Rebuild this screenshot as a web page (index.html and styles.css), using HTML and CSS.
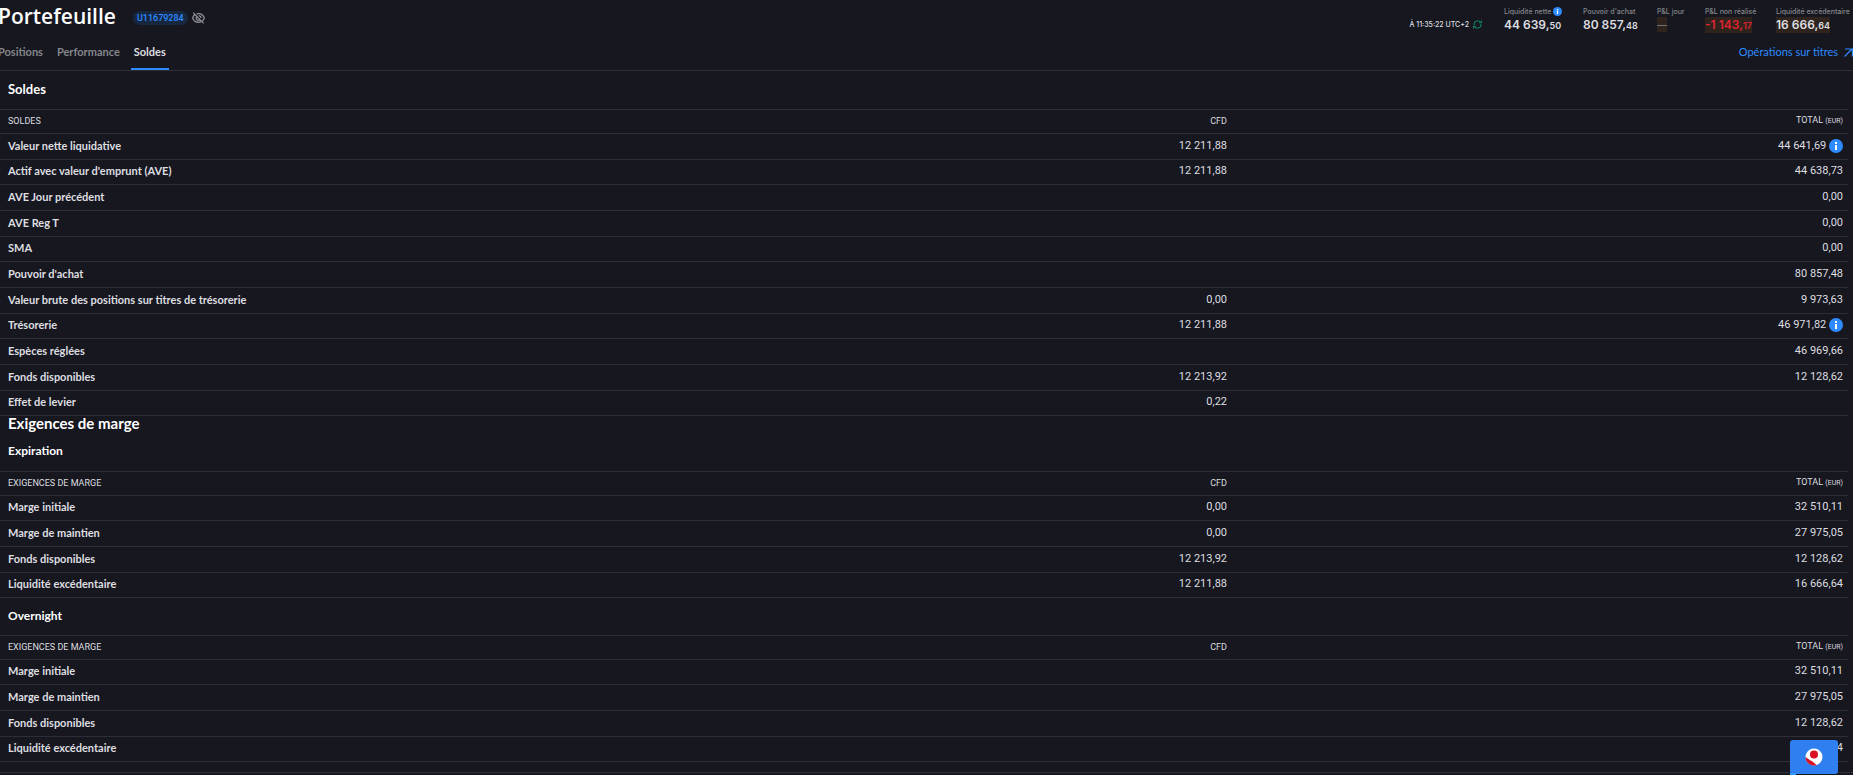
FILE: index.html
```
<!DOCTYPE html>
<html lang="fr">
<head>
  <meta charset="UTF-8">
  <meta name="viewport" content="width=device-width, initial-scale=1.0">
  <title>Portefeuille</title>
  <link rel="stylesheet" href="styles.css">
</head>

<body>
  <header class="topbar">
    <div class="account">
      <h1>Portefeuille</h1>
      <span class="account-id">U11679284</span>
      <button class="icon-btn" type="button" aria-label="Masquer les montants">
        <svg width="13" height="12" viewBox="0 0 13 12" fill="none" stroke="#909196" stroke-width="1.3">
          <path d="M2.700 2.600C1.800 3.400 1.100 4.500.7 6c.9 2.700 3 4.300 5.800 4.300.9 0 1.800-.2 2.600-.6M4.600 1.900C5.200 1.700 5.800 1.600 6.500 1.600c2.800 0 4.900 1.700 5.800 4.400-.4 1.200-1 2.100-1.900 2.900M1.200.6l10.400 10.800"/>
          <path d="M4.500 4.600a2.400 2.400 0 0 0 3.300 3.300M6.700 3.600a2.400 2.400 0 0 1 2.200 2.400"/>
        </svg>
      </button>
    </div>

    <div class="summary">
      <div class="updated">
        <span>À 11:35:22 UTC+2</span>
        <button class="icon-btn" type="button" aria-label="Actualiser">
          <svg width="9" height="9" viewBox="0 0 9 9" fill="none" stroke="#0f8a70" stroke-width="1">
            <path d="M1 5V4a3 3 0 0 1 3-3h1.500a3 3 0 0 1 2.300 1.300M8.500.5v2.300H6M8 4v1a3 3 0 0 1-3 3H3.500a3 3 0 0 1-2.300-1.300M.5 8.500V6.200H3"/>
          </svg>
        </button>
      </div>
      <dl class="figures">
        <div class="figure net">
          <dt>Liquidité nette
            <svg class="info-small" viewBox="0 0 14 14"><circle cx="7" cy="7" r="7" fill="#2e8bff"/><path d="M6 3h2v2H6zM6 6h2v5H6z" fill="#fff"/></svg>
          </dt>
          <dd>44 639,<small>50</small></dd>
        </div>
        <div class="figure power">
          <dt>Pouvoir d'achat</dt>
          <dd>80 857,<small>48</small></dd>
        </div>
        <div class="figure day">
          <dt>P&amp;L jour</dt>
          <dd class="changed dash">—</dd>
        </div>
        <div class="figure unrealized">
          <dt>P&amp;L non réalisé</dt>
          <dd class="changed loss">-1 143,<small>17</small></dd>
        </div>
        <div class="figure">
          <dt>Liquidité excédentaire</dt>
          <dd class="changed">16 666,<small>64</small></dd>
        </div>
      </dl>
    </div>
  </header>

  <nav class="tabs">
    <a href="#positions">Positions</a>
    <a href="#performance">Performance</a>
    <a class="active" href="#soldes">Soldes</a>
    <a class="operations" href="#operations">Opérations sur titres
      <svg width="9" height="9" viewBox="0 0 9 9" fill="none" stroke="#2e8bff" stroke-width="1.200"><path d="M.5 8.500L8 1M1 1h7.400v7.500"/></svg>
    </a>
  </nav>

  <main>
    <h2 class="balances-title" id="soldes">Soldes</h2>
    <table class="balances">
      <thead>
        <tr><th>SOLDES</th><th>CFD</th><th>TOTAL <small>(EUR)</small></th></tr>
      </thead>
      <tbody>
        <tr>
          <td>Valeur nette liquidative</td><td>12 211,88</td>
          <td>44 641,69 <svg class="info" viewBox="0 0 14 14"><circle cx="7" cy="7" r="7" fill="#2e8bff"/><path d="M6 3h2v2H6zM6 6h2v5H6z" fill="#fff"/></svg></td>
        </tr>
        <tr><td>Actif avec valeur d'emprunt (AVE)</td><td>12 211,88</td><td>44 638,73</td></tr>
        <tr><td>AVE Jour précédent</td><td></td><td>0,00</td></tr>
        <tr><td>AVE Reg T</td><td></td><td>0,00</td></tr>
        <tr><td>SMA</td><td></td><td>0,00</td></tr>
        <tr><td>Pouvoir d'achat</td><td></td><td>80 857,48</td></tr>
        <tr><td>Valeur brute des positions sur titres de trésorerie</td><td>0,00</td><td>9 973,63</td></tr>
        <tr>
          <td>Trésorerie</td><td>12 211,88</td>
          <td>46 971,82 <svg class="info" viewBox="0 0 14 14"><circle cx="7" cy="7" r="7" fill="#2e8bff"/><path d="M6 3h2v2H6zM6 6h2v5H6z" fill="#fff"/></svg></td>
        </tr>
        <tr><td>Espèces réglées</td><td></td><td>46 969,66</td></tr>
        <tr><td>Fonds disponibles</td><td>12 213,92</td><td>12 128,62</td></tr>
        <tr><td>Effet de levier</td><td>0,22</td><td></td></tr>
      </tbody>
    </table>

    <h2 class="margin-title">Exigences de marge</h2>
    <h3 class="first">Expiration</h3>
    <table class="margins">
      <thead>
        <tr><th>EXIGENCES DE MARGE</th><th>CFD</th><th>TOTAL <small>(EUR)</small></th></tr>
      </thead>
      <tbody>
        <tr><td>Marge initiale</td><td>0,00</td><td>32 510,11</td></tr>
        <tr><td>Marge de maintien</td><td>0,00</td><td>27 975,05</td></tr>
        <tr><td>Fonds disponibles</td><td>12 213,92</td><td>12 128,62</td></tr>
        <tr><td>Liquidité excédentaire</td><td>12 211,88</td><td>16 666,64</td></tr>
      </tbody>
    </table>

    <h3>Overnight</h3>
    <table class="margins">
      <thead>
        <tr><th>EXIGENCES DE MARGE</th><th>CFD</th><th>TOTAL <small>(EUR)</small></th></tr>
      </thead>
      <tbody>
        <tr><td>Marge initiale</td><td></td><td>32 510,11</td></tr>
        <tr><td>Marge de maintien</td><td></td><td>27 975,05</td></tr>
        <tr><td>Fonds disponibles</td><td></td><td>12 128,62</td></tr>
        <tr><td>Liquidité excédentaire</td><td></td><td>16 666,64</td></tr>
      </tbody>
    </table>
  </main>
  <footer></footer>

  <button class="assistant" type="button" aria-label="Assistant">
    <svg width="18" height="18" viewBox="0 0 18 18">
      <circle cx="9" cy="9" r="8.500" fill="#fff"/>
      <circle cx="9" cy="6.500" r="4" fill="#d81222"/>
      <path d="M.5 8.800C3 11.500 8 13 11.500 17.200A8.600 8.600 0 0 1 .5 8.800z" fill="#d81222"/>
    </svg>
  </button>
</body>

</html>
```
FILE: styles.css
```
* {
  box-sizing: border-box;
}

body {
  margin: 0;
  background-color: #16171f;
  color: #dedee0;
  font-family: Lato, "Liberation Sans", sans-serif;
  font-size: 11px;
  font-weight: 700;
  overflow: hidden;
}

h1, h2, h3, dl, dd {
  margin: 0;
}

h1, h2, h3 {
  color: #fff;
}

.icon-btn {
  display: flex;
  padding: 0;
  border: 0;
  background: none;
}

/* header */
.topbar {
  display: flex;
  justify-content: space-between;
  height: 36px;
}

.account {
  display: flex;
  align-items: center;
  height: 36px;
  margin-left: -2px;
}

h1 {
  font-family: "Open Sans", sans-serif;
  font-size: 21px;
  font-weight: 600;
  line-height: 32px;
  height: 36px;
  margin-right: 17px;
}

.account-id {
  padding: 0 4px;
  margin-right: 4px;
  border-radius: 7px;
  background-color: #172740;
  color: #2e8bff;
  font-family: Roboto, sans-serif;
  font-size: 9px;
  font-weight: 500;
  line-height: 14px;
}

.summary {
  display: flex;
  font-family: Inter, sans-serif;
  font-weight: 500;
}

.updated {
  display: flex;
  align-items: center;
  gap: 4px;
  height: 48px;
  margin-right: 22px;
  font-size: 7px;
}

.figures {
  display: flex;
  padding: 5px 5px 0 0;
}

.figure {
  width: 72px;
  white-space: nowrap;
}

.net {
  width: 79px;
}

.power {
  width: 74px;
}

.day {
  width: 48px;
}

.unrealized {
  width: 71px;
}

dt {
  display: flex;
  align-items: center;
  gap: 2px;
  height: 12px;
  color: #85868b;
  font-size: 7px;
}

dd {
  width: max-content;
  font-size: 12px;
  font-weight: 600;
  line-height: 15px;
}

dd small {
  font-size: 9px;
}

.changed {
  background-color: #2e241d;
}

.dash {
  color: #85868b;
  font-family: "Liberation Sans", sans-serif;
  font-size: 10px;
  font-weight: 400;
}

.loss {
  color: #e0232e;
}

.info-small {
  width: 9px;
  height: 9px;
}

/* tabs */
.tabs {
  display: flex;
  gap: 8px;
  height: 35px;
  border-bottom: 1px solid #2e2e38;
}

.tabs a {
  height: 34px;
  padding: 0 3px;
  border-bottom: 2px solid transparent;
  color: #85868b;
  line-height: 32px;
  text-decoration: none;
}

.tabs a:first-child {
  margin-left: -2px;
  padding-left: 0;
}

.tabs .active {
  border-color: #2e8bff;
  color: #dedee0;
}

.tabs .operations {
  display: flex;
  align-items: center;
  gap: 6px;
  margin-left: auto;
  padding: 0;
  color: #2e8bff;
  font-size: 11px;
  font-weight: 400;
}

/* balances */
main {
  padding-right: 5px;
}

h2, h3 {
  padding-left: 8px;
  font-weight: 700;
}

h2 {
  font-size: 15px;
}

h3 {
  height: 37px;
  font-size: 12px;
  line-height: 36px;
}

h3.first {
  height: 38px;
}

.balances-title {
  height: 38px;
  font-size: 13px;
  line-height: 36px;
}

.margin-title {
  height: 17px;
  line-height: 15px;
}

table {
  width: 100%;
  table-layout: fixed;
  border-collapse: separate;
  border-spacing: 0;
  border-top: 1px solid #2e2e38;
}

th, td {
  height: 26px;
  padding: 0 5px 2px 8px;
  border-bottom: 1px solid #2e2e38;
  text-align: right;
  line-height: 14px;
}

td {
  font-family: Roboto, sans-serif;
  font-weight: 400;
}

td:first-child {
  font-family: Lato, sans-serif;
  font-weight: 700;
}

th {
  height: 24px;
  font-family: Roboto, sans-serif;
  font-size: 9px;
  font-weight: 400;
}

th small {
  font-size: 7px;
}

th:first-child, td:first-child {
  text-align: left;
}

.balances tr:nth-child(3n+2) td, .margins tr:nth-child(3n+1) td {
  height: 25px;
}

.info {
  width: 14px;
  height: 14px;
  vertical-align: top;
}

footer {
  height: 11px;
  border-bottom: 1px solid #2e2e38;
}

/* floating button */
.assistant {
  position: fixed;
  right: 15px;
  bottom: 1px;
  display: flex;
  align-items: center;
  justify-content: center;
  width: 48px;
  height: 34px;
  border: 0;
  border-radius: 3px;
  background-color: #2f7ff0;
}

.assistant::after {
  content: '';
  position: absolute;
  left: 0;
  bottom: -1px;
  width: 6px;
  height: 2px;
  background-color: #2e9bff;
}
```
